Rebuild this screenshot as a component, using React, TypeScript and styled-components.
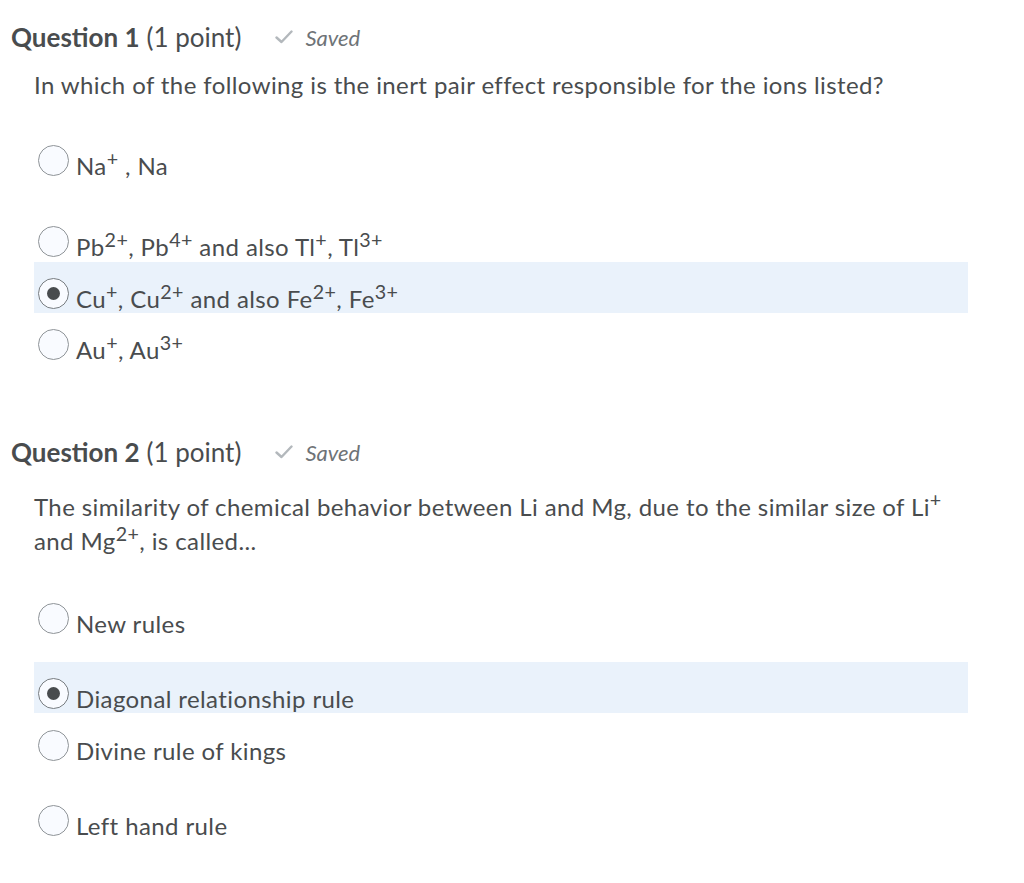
import React from 'react'
import styled, { createGlobalStyle } from 'styled-components'

const GlobalStyle = createGlobalStyle`
  body {
    margin: 0;
    background: #ffffff;
    font-family: Lato, "Open Sans", sans-serif;
    color: #494c4e;
  }
`

const Page = styled.div`
  padding: 19px 56px 40px 11px;
  display: flex;
  flex-direction: column;
`

const Header = styled.div<{ $top: number }>`
  display: flex;
  align-items: center;
  height: 36px;
  margin-top: ${(p) => p.$top}px;
  font-size: 26px;
  color: #494c4e;
`

const Bold = styled.span`
  font-weight: 700;
`

const Points = styled.span`
  margin-left: 7px;
`

const SavedTag = styled.span`
  display: inline-flex;
  align-items: center;
  gap: 12px;
  margin-left: 34px;
  font-size: 22px;
  font-style: italic;
  color: #6e7377;
`

const Prompt = styled.p<{ $top: number }>`
  margin: ${(p) => p.$top}px 0 0 23px;
  font-size: 24px;
  letter-spacing: 0.4px;
  line-height: 34px;
  color: #494c4e;
`

const Row = styled.div<{ $top: number; $selected?: boolean }>`
  display: flex;
  align-items: flex-start;
  gap: 7px;
  height: 51px;
  box-sizing: border-box;
  margin: ${(p) => p.$top}px 0 0 23px;
  padding: 16px 0 0 4px;
  background: ${(p) => (p.$selected ? '#eaf2fb' : 'transparent')};
`

const Radio = styled.span<{ $checked?: boolean }>`
  flex: none;
  width: 31px;
  height: 31px;
  box-sizing: border-box;
  border-radius: 50%;
  border: 1.5px solid ${(p) => (p.$checked ? '#777c80' : '#8f9498')};
  background: #f9fbff;
  display: flex;
  align-items: center;
  justify-content: center;

  &::after {
    content: '';
    display: ${(p) => (p.$checked ? 'block' : 'none')};
    width: 13px;
    height: 13px;
    border-radius: 50%;
    background: #494c4e;
  }
`

const Label = styled.span`
  margin-top: 5px;
  font-size: 24px;
  letter-spacing: 0.4px;
  line-height: 32px;
  color: #494c4e;
  white-space: nowrap;
`

const Sup = styled.sup`
  font-size: 0.82em;
  line-height: 0;
  vertical-align: baseline;
  position: relative;
  top: -0.45em;
`

const Check = () => (
  <svg width="18" height="14" viewBox="0 0 18 14" fill="none">
    <path d="M1.5 7.5 L6.5 12 L16.5 1.5" stroke="#b3b8bc" strokeWidth="2.4" strokeLinecap="round" strokeLinejoin="round" />
  </svg>
)

const QuestionHeader = ({ n, top }: { n: number; top: number }) => (
  <Header $top={top}>
    <Bold>Question {n}</Bold>
    <Points>(1 point)</Points>
    <SavedTag>
      <Check />
      Saved
    </SavedTag>
  </Header>
)

interface Choice {
  label: React.ReactNode
  top: number
  selected?: boolean
}

const q1: Choice[] = [
  { label: <>Na<Sup>+</Sup> , Na</>, top: 27 },
  { label: <>Pb<Sup>2+</Sup>, Pb<Sup>4+</Sup> and also Tl<Sup>+</Sup>, Tl<Sup>3+</Sup></>, top: 30 },
  { label: <>Cu<Sup>+</Sup>, Cu<Sup>2+</Sup> and also Fe<Sup>2+</Sup>, Fe<Sup>3+</Sup></>, top: 1, selected: true },
  { label: <>Au<Sup>+</Sup>, Au<Sup>3+</Sup></>, top: 0 },
]

const q2: Choice[] = [
  { label: 'New rules', top: 29 },
  { label: 'Diagonal relationship rule', top: 24, selected: true },
  { label: 'Divine rule of kings', top: 1 },
  { label: 'Left hand rule', top: 24 },
]

const Choices = ({ items }: { items: Choice[] }) => (
  <>
    {items.map((c, i) => (
      <Row key={i} $top={c.top} $selected={c.selected}>
        <Radio $checked={c.selected} />
        <Label>{c.label}</Label>
      </Row>
    ))}
  </>
)

export default function App() {
  return (
    <Page>
      <GlobalStyle />
      <QuestionHeader n={1} top={0} />
      <Prompt $top={13}>In which of the following is the inert pair effect responsible for the ions listed?</Prompt>
      <Choices items={q1} />

      <QuestionHeader n={2} top={70} />
      <Prompt $top={20}>
        The similarity of chemical behavior between Li and Mg, due to the similar size of Li<Sup>+</Sup> and Mg<Sup>2+</Sup>, is called...
      </Prompt>
      <Choices items={q2} />
    </Page>
  )
}
